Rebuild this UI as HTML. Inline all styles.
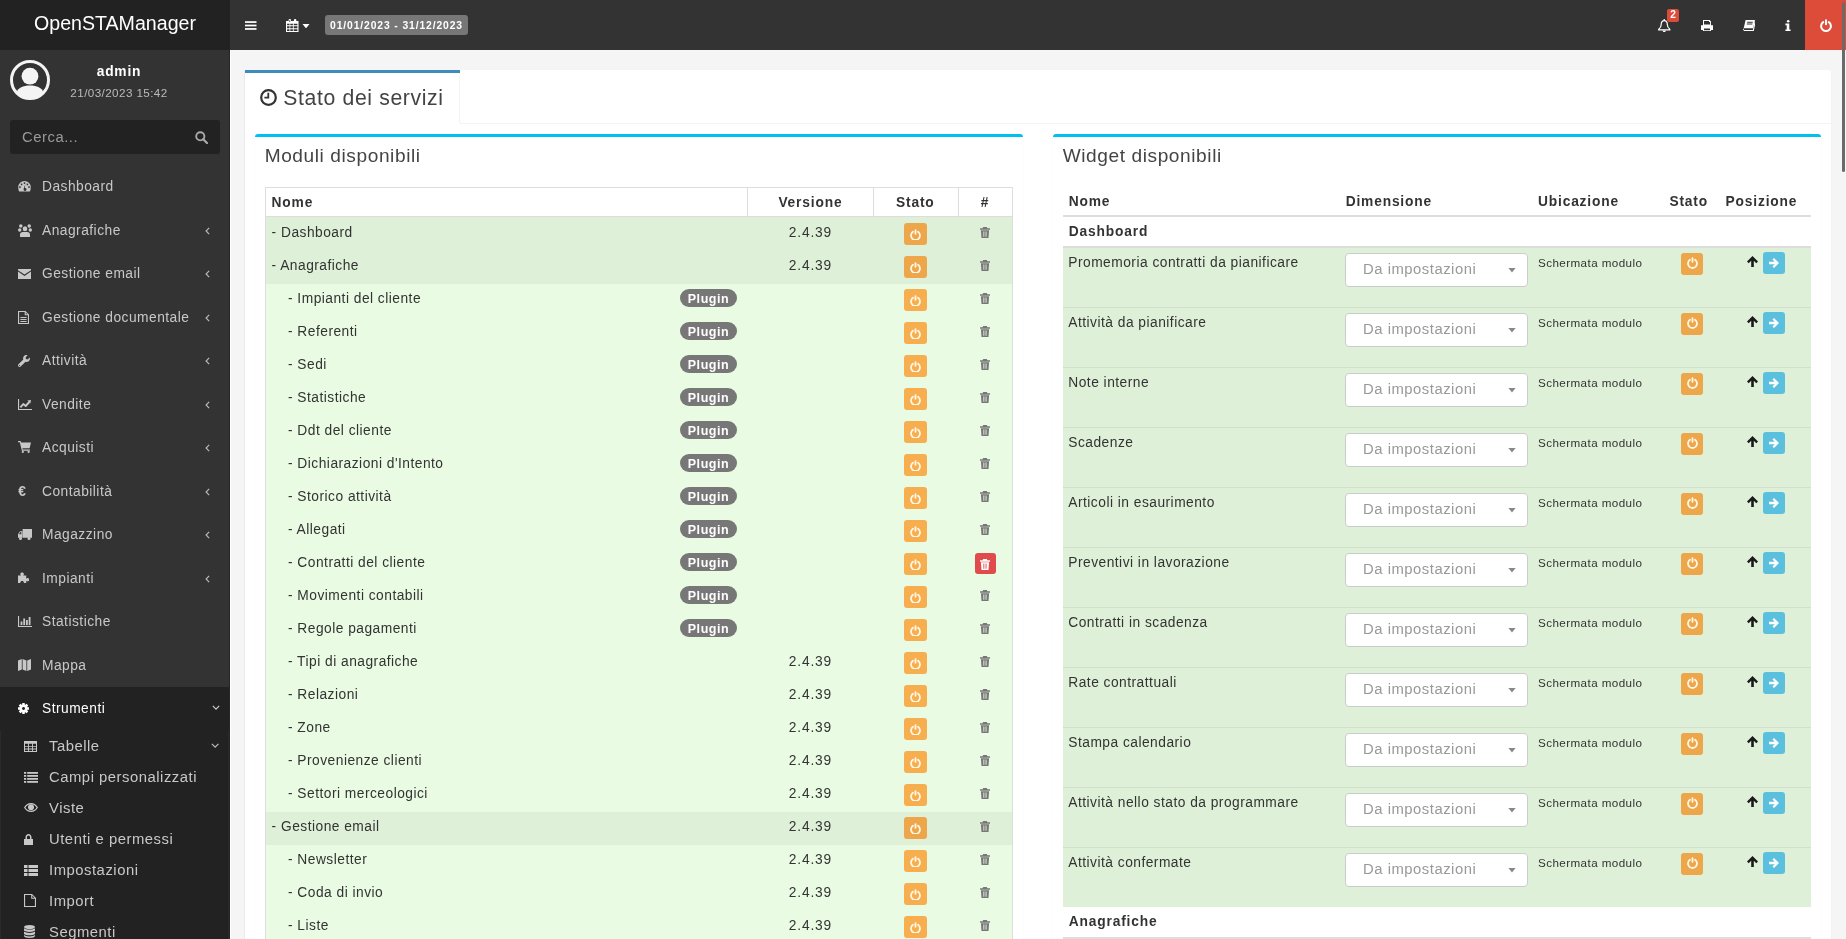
<!DOCTYPE html><html><head><meta charset="utf-8"><title>OpenSTAManager</title><style>
*{box-sizing:border-box;margin:0;padding:0}
html,body{width:1846px;height:939px;overflow:hidden}
body{font-family:"Liberation Sans", sans-serif;font-size:14px;color:#333;background:#f5f5f5;position:relative}
.abs{position:absolute}
#wrap{position:absolute;left:0;top:0;width:1846px;height:939px;overflow:hidden;will-change:transform}
.t{position:absolute;height:30px;line-height:30px}
svg{display:block}
</style></head><body><div id="wrap">
<div class="abs" style="left:0px;top:0px;width:230px;height:50px;background:#222;"></div>
<div class="t" style="left:0.00px;top:7.71px;width:230px;text-align:center;font-size:19.60px;color:#fff;letter-spacing:0em;">OpenSTAManager</div>
<div class="abs" style="left:230px;top:0px;width:1616px;height:50px;background:#333;"></div>
<div class="abs" style="left:245px;top:21px;"><svg width="11.5" height="9" viewBox="0 0 12 9" fill="currentColor" style="color:#fff;"><rect x="0" y="0" width="12" height="1.8"/><rect x="0" y="3.6" width="12" height="1.8"/><rect x="0" y="7.2" width="12" height="1.8"/></svg></div>
<div class="abs" style="left:286px;top:19px;"><svg width="12.5" height="13" viewBox="0 0 12.5 13" fill="currentColor" style="color:#fff;"><path fill-rule="evenodd" d="M0 1.9h12.5V13H0z M1.1 4.8h2.4v1.5H1.1z M4.3 4.8h2.6v1.5H4.3z M7.7 4.8h3.7v1.5H7.7z M1.1 7.3h2.4v2H1.1z M4.3 7.3h2.6v2H4.3z M7.7 7.3h3.7v2H7.7z M1.1 10.2h2.4v1.8H1.1z M4.3 10.2h2.6v1.8H4.3z M7.7 10.2h3.7v1.8H7.7z"/><rect x="2.6" y="0" width="2.4" height="3.6" rx="1.1"/><rect x="7.9" y="0" width="2.4" height="3.6" rx="1.1"/><rect x="3.4" y="0.9" width="0.8" height="2.2" rx=".4" fill="#333"/></svg></div>
<div class="abs" style="left:302px;top:23.8px;"><svg width="8" height="4.4" viewBox="0 0 8 5" fill="currentColor" style="color:#fff;"><path d="M0 0h8L4 5z"/></svg></div>
<div class="abs" style="left:325px;top:15px;width:143px;height:20px;background:#777;border-radius:3px"></div>
<div class="t" style="left:325.00px;top:11.12px;width:143px;text-align:center;font-size:10.34px;color:#fff;font-weight:bold;letter-spacing:0.085em;">01/01/2023 - 31/12/2023</div>
<div class="abs" style="left:1658px;top:19px;"><svg width="12.5" height="13" viewBox="0 0 12.5 13" fill="currentColor" style="color:#fff;"><circle cx="6.25" cy="0.9" r="0.8"/><path d="M6.25 1.6C8.5 1.6 9.3 3.4 9.3 5.6c0 2 .6 3.4 2.5 4.6v.6H.7v-.6c1.9-1.2 2.5-2.6 2.5-4.6 0-2.2.8-4 3.05-4z" fill="none" stroke="currentColor" stroke-width="1.2"/><path d="M4.7 11.4h3.1c0 1-.7 1.6-1.55 1.6S4.7 12.4 4.7 11.4z"/></svg></div>
<div class="abs" style="left:1667px;top:9px;width:12px;height:12.5px;background:#dd4b39;border-radius:2px"></div>
<div class="t" style="left:1667.00px;top:0.17px;width:12px;text-align:center;font-size:10.18px;color:#fff;font-weight:bold;letter-spacing:0em;">2</div>
<div class="abs" style="left:1701px;top:19.8px;"><svg width="12" height="11.3" viewBox="0 0 12 11.3" fill="currentColor" style="color:#fff;"><path fill-rule="evenodd" d="M2 0h6.6L10 1.4V5.2h2V10H10v1.3H2V10H0V5.2h2z M3 1.1v3.4h6.1V2H8V1.1z M3 8.6v1.6h6V8.6z"/></svg></div>
<div class="abs" style="left:1743.2px;top:19.8px;"><svg width="12" height="11.3" viewBox="0 0 12 11.3" fill="currentColor" style="color:#fff;"><path d="M2.6 0H12l-1.8 8.3H.7z"/><path d="M4.3 1.7h5.6l-.25 1.1H4.05z M3.95 3.4h5.6l-.25 1.1H3.7z" fill="#333"/><path d="M1 10.5H10.3L12.2 1.6" fill="none" stroke="currentColor" stroke-width="1.1"/><path d="M0 9.5c0-.5.4-.9.9-.9v1.9c-.5 0-.9-.5-.9-1z"/></svg></div>
<div class="abs" style="left:1784.5px;top:19.5px;"><svg width="6" height="11" viewBox="0 0 6 11" fill="currentColor" style="color:#fff;"><circle cx="3.2" cy="1.3" r="1.3"/><path d="M0.4 3.6h3.9v5.8h1.3V11H0.4V9.4h1.3V5.2H0.4z"/></svg></div>
<div class="abs" style="left:1805px;top:0px;width:41px;height:50px;background:#dd4b39;"></div>
<div class="abs" style="left:1819.5px;top:18.5px;"><svg width="12" height="13" viewBox="0 0 12 13" fill="currentColor" style="color:#fff;"><path d="M3.2 3.1A4.9 4.9 0 1 0 8.8 3.1" fill="none" stroke="currentColor" stroke-width="2" stroke-linecap="round"/><rect x="5" y="0.2" width="2" height="6" rx="1"/></svg></div>
<div class="abs" style="left:0px;top:50px;width:230px;height:889px;background:#333;"></div>
<div class="abs" style="left:10px;top:60px;"><svg width="40" height="40" viewBox="0 0 40 40" fill="currentColor" style="color:#f4f4f4;"><circle cx="20" cy="20" r="18.5" fill="none" stroke="currentColor" stroke-width="3"/><circle cx="20" cy="16.2" r="8.4"/><path d="M6.6 32.2C8.2 27.6 12.8 25.4 20 25.4s11.8 2.2 13.4 6.8C30.2 36 25.4 38.6 20 38.6S9.8 36 6.6 32.2z"/></svg></div>
<div class="t" style="left:70.00px;top:56.63px;width:98px;text-align:center;font-size:13.78px;color:#fff;font-weight:bold;letter-spacing:0.06em;">admin</div>
<div class="t" style="left:70.00px;top:78.36px;width:98px;text-align:center;font-size:11.66px;color:#bbb;letter-spacing:0.035em;">21/03/2023 15:42</div>
<div class="abs" style="left:10px;top:120px;width:210px;height:34px;background:#222;border-radius:3px"></div>
<div class="t" style="left:22.00px;top:122.26px;white-space:nowrap;text-align:left;font-size:14.84px;color:#999;letter-spacing:0.035em;">Cerca...</div>
<div class="abs" style="left:195px;top:131px;"><svg width="13" height="13" viewBox="0 0 13 13" fill="currentColor" style="color:#aaa;"><circle cx="5.3" cy="5.3" r="4.1" fill="none" stroke="currentColor" stroke-width="1.9"/><path d="M8.2 8.2l3.8 3.8" stroke="currentColor" stroke-width="2.2" stroke-linecap="round"/></svg></div>
<div class="abs" style="left:0px;top:686.75px;width:230px;height:252.25px;background:#222;"></div>
<div class="t" style="left:42.00px;top:172.28px;white-space:nowrap;text-align:left;font-size:13.78px;color:#c8c8c8;letter-spacing:0.035em;">Dashboard</div>
<div class="abs" style="left:18px;top:181.3px;"><svg width="13" height="10.6" viewBox="0 0 13 11" fill="currentColor" style="color:#c8c8c8;"><path fill-rule="evenodd" d="M6.5 0A6.5 6.5 0 0 1 13 6.5c0 1.9-.4 3.3-1 4.5H1c-.6-1.2-1-2.6-1-4.5A6.5 6.5 0 0 1 6.5 0z M6.5 1.2a.9.9 0 1 0 .01 0z M3.5 2.6a.9.9 0 1 0 .01 0z M9.5 2.6a.9.9 0 1 0 .01 0z M1.8 5.5a.9.9 0 1 0 .01 0z M11.2 5.5a.9.9 0 1 0 .01 0z M7.3 3.2L6.9 7.4A1.5 1.5 0 1 1 5.6 8.6 1.5 1.5 0 0 1 6 7.3z"/></svg></div>
<div class="t" style="left:42.00px;top:215.78px;white-space:nowrap;text-align:left;font-size:13.78px;color:#c8c8c8;letter-spacing:0.035em;">Anagrafiche</div>
<div class="abs" style="left:18px;top:223.5px;"><svg width="14" height="13.5" viewBox="0 0 14 13.5" fill="currentColor" style="color:#c8c8c8;"><circle cx="2.8" cy="2" r="1.75"/><circle cx="11.2" cy="2" r="1.75"/><ellipse cx="1.7" cy="6" rx="1.7" ry="1.65"/><ellipse cx="12.3" cy="6" rx="1.7" ry="1.65"/><ellipse cx="7" cy="4.7" rx="2.3" ry="2.5"/><path d="M2 10.6C2 8.9 3.2 7.9 4.8 7.9h4.4c1.6 0 2.8 1 2.8 2.7v1.9c0 .6-.4 1-1 1H3c-.6 0-1-.4-1-1z"/></svg></div>
<div class="abs" style="left:205.4px;top:226.55px;"><svg width="5" height="8" viewBox="0 0 6 9" fill="currentColor" style="color:#bbb;"><path d="M5 0.8L1.3 4.5 5 8.2" fill="none" stroke="currentColor" stroke-width="1.4"/></svg></div>
<div class="t" style="left:42.00px;top:259.28px;white-space:nowrap;text-align:left;font-size:13.78px;color:#c8c8c8;letter-spacing:0.035em;">Gestione email</div>
<div class="abs" style="left:18px;top:268.5px;"><svg width="13" height="10" viewBox="0 0 13 10" fill="currentColor" style="color:#c8c8c8;"><path d="M0 0h13v1.2L6.5 5.6 0 1.2z M0 2.6l6.5 4.4L13 2.6V10H0z"/></svg></div>
<div class="abs" style="left:205.4px;top:270.04999999999995px;"><svg width="5" height="8" viewBox="0 0 6 9" fill="currentColor" style="color:#bbb;"><path d="M5 0.8L1.3 4.5 5 8.2" fill="none" stroke="currentColor" stroke-width="1.4"/></svg></div>
<div class="t" style="left:42.00px;top:302.78px;white-space:nowrap;text-align:left;font-size:13.78px;color:#c8c8c8;letter-spacing:0.035em;">Gestione documentale</div>
<div class="abs" style="left:18px;top:311px;"><svg width="11" height="13" viewBox="0 0 11 13" fill="currentColor" style="color:#c8c8c8;"><path fill-rule="evenodd" d="M0 0h7.5L11 3.5V13H0z M1.1 1.1v10.8h8.8V4.3H6.7V1.1z M7.8 1.6v1.6h1.6z M2.4 6h6.2v1H2.4z M2.4 8h6.2v1H2.4z M2.4 10h6.2v1H2.4z"/></svg></div>
<div class="abs" style="left:205.4px;top:313.54999999999995px;"><svg width="5" height="8" viewBox="0 0 6 9" fill="currentColor" style="color:#bbb;"><path d="M5 0.8L1.3 4.5 5 8.2" fill="none" stroke="currentColor" stroke-width="1.4"/></svg></div>
<div class="t" style="left:42.00px;top:346.28px;white-space:nowrap;text-align:left;font-size:13.78px;color:#c8c8c8;letter-spacing:0.035em;">Attività</div>
<div class="abs" style="left:18px;top:355px;"><svg width="12" height="12" viewBox="0 0 12 12" fill="currentColor" style="color:#c8c8c8;"><path d="M11.7 2.6L9.6 4.4 7.9 4.1 7.6 2.4 9.5.3C8 -.3 6.3.3 5.5 1.7c-.5.9-.5 1.9-.2 2.8L.5 9.3c-.7.7-.7 1.7 0 2.3s1.6.6 2.2 0l4.8-4.8c.9.3 2 .3 2.8-.2 1.4-.8 2-2.5 1.4-4zM1.6 11.2a.6.6 0 1 1 0-1.2.6.6 0 0 1 0 1.2z"/></svg></div>
<div class="abs" style="left:205.4px;top:357.04999999999995px;"><svg width="5" height="8" viewBox="0 0 6 9" fill="currentColor" style="color:#bbb;"><path d="M5 0.8L1.3 4.5 5 8.2" fill="none" stroke="currentColor" stroke-width="1.4"/></svg></div>
<div class="t" style="left:42.00px;top:389.78px;white-space:nowrap;text-align:left;font-size:13.78px;color:#c8c8c8;letter-spacing:0.035em;">Vendite</div>
<div class="abs" style="left:18px;top:398.5px;"><svg width="14" height="11" viewBox="0 0 14 11" fill="currentColor" style="color:#c8c8c8;"><path d="M0 0h1.1v9.9H14V11H0z"/><path d="M2.4 8.4L5.3 5l2.4 2 3.6-4" fill="none" stroke="currentColor" stroke-width="1.9" stroke-linejoin="round"/><path d="M9.4 1.6L13 .9l-.6 3.6z"/></svg></div>
<div class="abs" style="left:205.4px;top:400.54999999999995px;"><svg width="5" height="8" viewBox="0 0 6 9" fill="currentColor" style="color:#bbb;"><path d="M5 0.8L1.3 4.5 5 8.2" fill="none" stroke="currentColor" stroke-width="1.4"/></svg></div>
<div class="t" style="left:42.00px;top:433.28px;white-space:nowrap;text-align:left;font-size:13.78px;color:#c8c8c8;letter-spacing:0.035em;">Acquisti</div>
<div class="abs" style="left:18px;top:441px;"><svg width="13" height="12" viewBox="0 0 13 12" fill="currentColor" style="color:#c8c8c8;"><path d="M0 0h2.6l.5 1.6h9.9l-1.4 5.6H4.4l.4 1.3h7.1v1.2H3.9L1.8 1.2H0z"/><circle cx="4.8" cy="10.9" r="1.1"/><circle cx="10.6" cy="10.9" r="1.1"/></svg></div>
<div class="abs" style="left:205.4px;top:444.04999999999995px;"><svg width="5" height="8" viewBox="0 0 6 9" fill="currentColor" style="color:#bbb;"><path d="M5 0.8L1.3 4.5 5 8.2" fill="none" stroke="currentColor" stroke-width="1.4"/></svg></div>
<div class="t" style="left:42.00px;top:476.78px;white-space:nowrap;text-align:left;font-size:13.78px;color:#c8c8c8;letter-spacing:0.035em;">Contabilità</div>
<div class="t" style="left:18.30px;top:476.78px;white-space:nowrap;text-align:left;font-size:13.78px;color:#c8c8c8;font-weight:bold;letter-spacing:0em;">€</div>
<div class="abs" style="left:205.4px;top:487.54999999999995px;"><svg width="5" height="8" viewBox="0 0 6 9" fill="currentColor" style="color:#bbb;"><path d="M5 0.8L1.3 4.5 5 8.2" fill="none" stroke="currentColor" stroke-width="1.4"/></svg></div>
<div class="t" style="left:42.00px;top:520.28px;white-space:nowrap;text-align:left;font-size:13.78px;color:#c8c8c8;letter-spacing:0.035em;">Magazzino</div>
<div class="abs" style="left:18px;top:528.5px;"><svg width="14" height="11" viewBox="0 0 14 11" fill="currentColor" style="color:#c8c8c8;"><path fill-rule="evenodd" d="M4.6 0H14v8.8H4.6z M0 5.2L2 2.2h2.3v6.6H0z M1 5.2h2.3V3.2H2.2z"/><circle cx="2.5" cy="9.4" r="1.5"/><circle cx="11" cy="9.4" r="1.5"/></svg></div>
<div class="abs" style="left:205.4px;top:531.05px;"><svg width="5" height="8" viewBox="0 0 6 9" fill="currentColor" style="color:#bbb;"><path d="M5 0.8L1.3 4.5 5 8.2" fill="none" stroke="currentColor" stroke-width="1.4"/></svg></div>
<div class="t" style="left:42.00px;top:563.78px;white-space:nowrap;text-align:left;font-size:13.78px;color:#c8c8c8;letter-spacing:0.035em;">Impianti</div>
<div class="abs" style="left:18px;top:572px;"><svg width="12" height="11.4" viewBox="0 0 12 11.4" fill="currentColor" style="color:#c8c8c8;"><path d="M0 3.4h3c-.5-.4-.7-.8-.7-1.3C2.3 1.1 3.1.4 4.1.4s1.8.7 1.8 1.7c0 .5-.2.9-.7 1.3h3v3.3c.4-.4.8-.6 1.3-.6 1 0 1.6.7 1.6 1.6s-.6 1.6-1.6 1.6c-.5 0-.9-.2-1.3-.6v2.7H5.5c.3-.3.4-.6.4-1 0-.9-.8-1.5-1.8-1.5s-1.8.6-1.8 1.5c0 .4.1.7.4 1H0z"/></svg></div>
<div class="abs" style="left:205.4px;top:574.55px;"><svg width="5" height="8" viewBox="0 0 6 9" fill="currentColor" style="color:#bbb;"><path d="M5 0.8L1.3 4.5 5 8.2" fill="none" stroke="currentColor" stroke-width="1.4"/></svg></div>
<div class="t" style="left:42.00px;top:607.28px;white-space:nowrap;text-align:left;font-size:13.78px;color:#c8c8c8;letter-spacing:0.035em;">Statistiche</div>
<div class="abs" style="left:18px;top:615.5px;"><svg width="14" height="11" viewBox="0 0 14 11" fill="currentColor" style="color:#c8c8c8;"><path d="M0 0h1.1v9.9H14V11H0z"/><rect x="2.6" y="5.5" width="1.8" height="3.6"/><rect x="5.3" y="2.5" width="1.8" height="6.6"/><rect x="8" y="4" width="1.8" height="5.1"/><rect x="10.7" y="1" width="1.8" height="8.1"/></svg></div>
<div class="t" style="left:42.00px;top:650.78px;white-space:nowrap;text-align:left;font-size:13.78px;color:#c8c8c8;letter-spacing:0.035em;">Mappa</div>
<div class="abs" style="left:18px;top:659px;"><svg width="13" height="12" viewBox="0 0 13 12" fill="currentColor" style="color:#c8c8c8;"><path d="M0 1.5L3.8 0v10.5L0 12z M4.6 0l3.8 1.5V12L4.6 10.5z M9.2 1.5L13 0v10.5L9.2 12z"/></svg></div>
<div class="t" style="left:42.00px;top:694.28px;white-space:nowrap;text-align:left;font-size:13.78px;color:#fff;letter-spacing:0.035em;">Strumenti</div>
<div class="abs" style="left:18px;top:703px;"><svg width="11" height="11" viewBox="0 0 11 11" fill="currentColor" style="color:#fff;"><path fill-rule="evenodd" d="M4.13 1.63 L4.28 0.03 L6.72 0.03 L6.87 1.63 L7.27 1.80 L8.50 0.77 L10.23 2.50 L9.20 3.73 L9.37 4.13 L10.97 4.28 L10.97 6.72 L9.37 6.87 L9.20 7.27 L10.23 8.50 L8.50 10.23 L7.27 9.20 L6.87 9.37 L6.72 10.97 L4.28 10.97 L4.13 9.37 L3.73 9.20 L2.50 10.23 L0.77 8.50 L1.80 7.27 L1.63 6.87 L0.03 6.72 L0.03 4.28 L1.63 4.13 L1.80 3.73 L0.77 2.50 L2.50 0.77 L3.73 1.80z M5.5 4.0a1.5 1.5 0 1 0 .01 0z"/></svg></div>
<div class="abs" style="left:212px;top:705.35px;"><svg width="8" height="5.2" viewBox="0 0 9 6" fill="currentColor" style="color:#ccc;"><path d="M0.8 1l3.7 3.7L8.2 1" fill="none" stroke="currentColor" stroke-width="1.4"/></svg></div>
<div class="t" style="left:49.00px;top:731.26px;white-space:nowrap;text-align:left;font-size:14.84px;color:#c8c8c8;letter-spacing:0.035em;">Tabelle</div>
<div class="abs" style="left:24px;top:740.5px;"><svg width="13" height="11" viewBox="0 0 13 11" fill="currentColor" style="color:#c8c8c8;"><path fill-rule="evenodd" d="M0 0h13v11H0z M1 2.8h3.1v2.1H1z M5 2.8h3v2.1H5z M8.9 2.8H12v2.1H8.9z M1 5.8h3.1v1.8H1z M5 5.8h3v1.8H5z M8.9 5.8H12v1.8H8.9z M1 8.5h3.1V10H1z M5 8.5h3V10H5z M8.9 8.5H12V10H8.9z"/></svg></div>
<div class="abs" style="left:210.7px;top:743.4px;"><svg width="8.3" height="5.3" viewBox="0 0 9 6" fill="currentColor" style="color:#bbb;"><path d="M0.8 1l3.7 3.7L8.2 1" fill="none" stroke="currentColor" stroke-width="1.4"/></svg></div>
<div class="t" style="left:49.00px;top:762.26px;white-space:nowrap;text-align:left;font-size:14.84px;color:#c8c8c8;letter-spacing:0.035em;">Campi personalizzati</div>
<div class="abs" style="left:24px;top:771.5px;"><svg width="14" height="11" viewBox="0 0 14 11" fill="currentColor" style="color:#c8c8c8;"><rect x="0" y="0" width="2.2" height="1.8"/><rect x="3.2" y="0" width="10.8" height="1.8"/><rect x="0" y="3" width="2.2" height="1.8"/><rect x="3.2" y="3" width="10.8" height="1.8"/><rect x="0" y="6" width="2.2" height="1.8"/><rect x="3.2" y="6" width="10.8" height="1.8"/><rect x="0" y="9" width="2.2" height="1.8"/><rect x="3.2" y="9" width="10.8" height="1.8"/></svg></div>
<div class="t" style="left:49.00px;top:793.26px;white-space:nowrap;text-align:left;font-size:14.84px;color:#c8c8c8;letter-spacing:0.035em;">Viste</div>
<div class="abs" style="left:24px;top:802.5px;"><svg width="14" height="9" viewBox="0 0 14 9" fill="currentColor" style="color:#c8c8c8;"><path fill-rule="evenodd" d="M7 0C10 0 12.6 1.8 14 4.5 12.6 7.2 10 9 7 9S1.4 7.2 0 4.5C1.4 1.8 4 0 7 0z M7 1.2C4.8 1.2 2.7 2.4 1.4 4.5 2.7 6.6 4.8 7.8 7 7.8s4.3-1.2 5.6-3.3C11.3 2.4 9.2 1.2 7 1.2z"/><circle cx="7" cy="4.3" r="3"/></svg></div>
<div class="t" style="left:49.00px;top:824.26px;white-space:nowrap;text-align:left;font-size:14.84px;color:#c8c8c8;letter-spacing:0.035em;">Utenti e permessi</div>
<div class="abs" style="left:24px;top:833.5px;"><svg width="9" height="11" viewBox="0 0 9 11" fill="currentColor" style="color:#c8c8c8;"><path fill-rule="evenodd" d="M0 5h9v6H0z M1.5 5V3.2C1.5 1.4 2.8 0 4.5 0S7.5 1.4 7.5 3.2V5H6V3.2C6 2.3 5.3 1.5 4.5 1.5S3 2.3 3 3.2V5z"/></svg></div>
<div class="t" style="left:49.00px;top:855.26px;white-space:nowrap;text-align:left;font-size:14.84px;color:#c8c8c8;letter-spacing:0.035em;">Impostazioni</div>
<div class="abs" style="left:24px;top:864.5px;"><svg width="14" height="11" viewBox="0 0 14 11" fill="currentColor" style="color:#c8c8c8;"><rect x="0" y="0" width="3.5" height="3"/><rect x="4.5" y="0" width="9.5" height="3"/><rect x="0" y="4" width="3.5" height="3"/><rect x="4.5" y="4" width="9.5" height="3"/><rect x="0" y="8" width="3.5" height="3"/><rect x="4.5" y="8" width="9.5" height="3"/></svg></div>
<div class="t" style="left:49.00px;top:886.26px;white-space:nowrap;text-align:left;font-size:14.84px;color:#c8c8c8;letter-spacing:0.035em;">Import</div>
<div class="abs" style="left:24px;top:894px;"><svg width="12" height="13" viewBox="0 0 12 13" fill="currentColor" style="color:#c8c8c8;"><path fill-rule="evenodd" d="M0 0h8l4 4v9H0z M1.1 1.1v10.8h9.8V4.8H7.2V1.1z M8.3 1.6v2.1h2.1z"/></svg></div>
<div class="t" style="left:49.00px;top:917.26px;white-space:nowrap;text-align:left;font-size:14.84px;color:#c8c8c8;letter-spacing:0.035em;">Segmenti</div>
<div class="abs" style="left:24px;top:925px;"><svg width="11" height="13" viewBox="0 0 11 13" fill="currentColor" style="color:#c8c8c8;"><ellipse cx="5.5" cy="2" rx="5.5" ry="2"/><path d="M0 3.2c1 .9 3 1.4 5.5 1.4S10 4.1 11 3.2v2.3c-1 .9-3 1.4-5.5 1.4S1 6.4 0 5.5z M0 6.6c1 .9 3 1.4 5.5 1.4S10 7.5 11 6.6v2.3c-1 .9-3 1.4-5.5 1.4S1 9.8 0 8.9z M0 10c1 .9 3 1.4 5.5 1.4S10 10.9 11 10v1c0 1.1-2.5 2-5.5 2S0 12.1 0 11z"/></svg></div>
<div class="abs" style="left:229px;top:50px;width:1px;height:889px;background:#262626;"></div>
<div class="abs" style="left:230px;top:50px;width:1px;height:889px;background:#fff;"></div>
<div class="abs" style="left:0px;top:731px;width:1px;height:208px;background:#2b2b2b;"></div>
<div class="abs" style="left:228px;top:731px;width:1px;height:208px;background:#2a2a2a;"></div>
<div class="abs" style="left:244px;top:70px;width:1px;height:869px;background:#ececec;"></div>
<div class="abs" style="left:245px;top:70px;width:1586px;height:900px;background:#fff;box-shadow:0 1px 1px rgba(0,0,0,.1);border-radius:3px"></div>
<div class="abs" style="left:245px;top:70px;width:215px;height:3px;background:#3c8dbc;"></div>
<div class="abs" style="left:459px;top:73px;width:1px;height:50px;background:#f4f4f4;"></div>
<div class="abs" style="left:460px;top:123px;width:1371px;height:1px;background:#f4f4f4;"></div>
<div class="abs" style="left:259.5px;top:89px;"><svg width="17" height="17" viewBox="0 0 17 17" fill="currentColor" style="color:#333;"><circle cx="8.5" cy="8.5" r="7.3" fill="none" stroke="currentColor" stroke-width="2.2"/><path d="M7.4 3.8h1.8v5.8H4.4V7.8h3z"/></svg></div>
<div class="t" style="left:283.30px;top:83.05px;white-space:nowrap;text-align:left;font-size:21.20px;color:#444;letter-spacing:0.03em;">Stato dei servizi</div>
<div class="abs" style="left:255px;top:134px;width:768px;height:830px;background:#fff;border-top:3px solid #00c0ef;border-radius:3px;box-shadow:0 1px 1px rgba(0,0,0,.12)"></div>
<div class="t" style="left:264.70px;top:140.79px;white-space:nowrap;text-align:left;font-size:19.08px;color:#444;letter-spacing:0.031em;">Moduli disponibili</div>
<div class="abs" style="left:1053px;top:134px;width:768px;height:830px;background:#fff;border-top:3px solid #00c0ef;border-radius:3px;box-shadow:0 1px 1px rgba(0,0,0,.12)"></div>
<div class="t" style="left:1062.70px;top:140.79px;white-space:nowrap;text-align:left;font-size:19.08px;color:#444;letter-spacing:0.031em;">Widget disponibili</div>
<div class="abs" style="left:265px;top:187px;width:747.5px;height:30px;background:#fff;border:1px solid #ddd"></div>
<div class="abs" style="left:747.4px;top:187px;width:1px;height:30px;background:#ddd;"></div>
<div class="abs" style="left:873.3px;top:187px;width:1px;height:30px;background:#ddd;"></div>
<div class="abs" style="left:957.5px;top:187px;width:1px;height:30px;background:#ddd;"></div>
<div class="t" style="left:271.60px;top:187.63px;white-space:nowrap;text-align:left;font-size:13.78px;color:#333;font-weight:bold;letter-spacing:0.06em;">Nome</div>
<div class="t" style="left:747.40px;top:187.63px;width:126px;text-align:center;font-size:13.78px;color:#333;font-weight:bold;letter-spacing:0.06em;">Versione</div>
<div class="t" style="left:873.30px;top:187.63px;width:84px;text-align:center;font-size:13.78px;color:#333;font-weight:bold;letter-spacing:0.06em;">Stato</div>
<div class="t" style="left:957.50px;top:187.63px;width:55px;text-align:center;font-size:13.78px;color:#333;font-weight:bold;letter-spacing:0.06em;">#</div>
<div class="abs" style="left:265px;top:217px;width:747.5px;height:34px;background:#dff0d8;border-left:1px solid #ddd;border-right:1px solid #ddd"></div>
<div class="t" style="left:271.60px;top:217.63px;white-space:nowrap;text-align:left;font-size:13.78px;color:#333;letter-spacing:0.035em;">- Dashboard</div>
<div class="t" style="left:747.40px;top:217.63px;width:126px;text-align:center;font-size:13.78px;color:#333;letter-spacing:0.06em;">2.4.39</div>
<div class="abs" style="left:904px;top:223px;width:23px;height:22px;background:#eea64a;border-radius:3px"></div>
<div class="abs" style="left:910px;top:228.6px;"><svg width="11" height="11.9" viewBox="0 0 12 13" fill="currentColor" style="color:#fff8e8;"><path d="M3.2 3.1A4.9 4.9 0 1 0 8.8 3.1" fill="none" stroke="currentColor" stroke-width="2" stroke-linecap="round"/><rect x="5" y="0.2" width="2" height="6" rx="1"/></svg></div>
<div class="abs" style="left:980.3px;top:227px;"><svg width="10" height="11" viewBox="0 0 10 11" fill="currentColor" style="color:#777;"><path fill-rule="evenodd" d="M3.2 0h3.6l.6 1.2H10v1.5H0V1.2h2.6z M0.9 3.2h8.2l-.6 7.8H1.5z M3.4 4.5v5.2h.9V4.5z M5.6 4.5v5.2h.9V4.5z"/></svg></div>
<div class="abs" style="left:265px;top:251px;width:747.5px;height:33px;background:#dff0d8;border-left:1px solid #ddd;border-right:1px solid #ddd"></div>
<div class="t" style="left:271.60px;top:250.63px;white-space:nowrap;text-align:left;font-size:13.78px;color:#333;letter-spacing:0.035em;">- Anagrafiche</div>
<div class="t" style="left:747.40px;top:250.63px;width:126px;text-align:center;font-size:13.78px;color:#333;letter-spacing:0.06em;">2.4.39</div>
<div class="abs" style="left:904px;top:256px;width:23px;height:22px;background:#eea64a;border-radius:3px"></div>
<div class="abs" style="left:910px;top:261.6px;"><svg width="11" height="11.9" viewBox="0 0 12 13" fill="currentColor" style="color:#fff8e8;"><path d="M3.2 3.1A4.9 4.9 0 1 0 8.8 3.1" fill="none" stroke="currentColor" stroke-width="2" stroke-linecap="round"/><rect x="5" y="0.2" width="2" height="6" rx="1"/></svg></div>
<div class="abs" style="left:980.3px;top:260px;"><svg width="10" height="11" viewBox="0 0 10 11" fill="currentColor" style="color:#777;"><path fill-rule="evenodd" d="M3.2 0h3.6l.6 1.2H10v1.5H0V1.2h2.6z M0.9 3.2h8.2l-.6 7.8H1.5z M3.4 4.5v5.2h.9V4.5z M5.6 4.5v5.2h.9V4.5z"/></svg></div>
<div class="abs" style="left:265px;top:284px;width:747.5px;height:33px;background:#e9fbe3;border-left:1px solid #ddd;border-right:1px solid #ddd"></div>
<div class="t" style="left:288.00px;top:283.63px;white-space:nowrap;text-align:left;font-size:13.78px;color:#333;letter-spacing:0.035em;">- Impianti del cliente</div>
<div class="abs" style="left:680px;top:289.3px;width:57px;height:17.5px;background:#777;border-radius:9px"></div>
<div class="t" style="left:680.00px;top:284.07px;width:57px;text-align:center;font-size:12.51px;color:#fff;font-weight:bold;letter-spacing:0.045em;">Plugin</div>
<div class="abs" style="left:904px;top:289px;width:23px;height:22px;background:#f7ae4f;border-radius:3px"></div>
<div class="abs" style="left:910px;top:294.6px;"><svg width="11" height="11.9" viewBox="0 0 12 13" fill="currentColor" style="color:#fff8e8;"><path d="M3.2 3.1A4.9 4.9 0 1 0 8.8 3.1" fill="none" stroke="currentColor" stroke-width="2" stroke-linecap="round"/><rect x="5" y="0.2" width="2" height="6" rx="1"/></svg></div>
<div class="abs" style="left:980.3px;top:293px;"><svg width="10" height="11" viewBox="0 0 10 11" fill="currentColor" style="color:#777;"><path fill-rule="evenodd" d="M3.2 0h3.6l.6 1.2H10v1.5H0V1.2h2.6z M0.9 3.2h8.2l-.6 7.8H1.5z M3.4 4.5v5.2h.9V4.5z M5.6 4.5v5.2h.9V4.5z"/></svg></div>
<div class="abs" style="left:265px;top:317px;width:747.5px;height:33px;background:#e9fbe3;border-left:1px solid #ddd;border-right:1px solid #ddd"></div>
<div class="t" style="left:288.00px;top:316.63px;white-space:nowrap;text-align:left;font-size:13.78px;color:#333;letter-spacing:0.035em;">- Referenti</div>
<div class="abs" style="left:680px;top:322.3px;width:57px;height:17.5px;background:#777;border-radius:9px"></div>
<div class="t" style="left:680.00px;top:317.07px;width:57px;text-align:center;font-size:12.51px;color:#fff;font-weight:bold;letter-spacing:0.045em;">Plugin</div>
<div class="abs" style="left:904px;top:322px;width:23px;height:22px;background:#f7ae4f;border-radius:3px"></div>
<div class="abs" style="left:910px;top:327.6px;"><svg width="11" height="11.9" viewBox="0 0 12 13" fill="currentColor" style="color:#fff8e8;"><path d="M3.2 3.1A4.9 4.9 0 1 0 8.8 3.1" fill="none" stroke="currentColor" stroke-width="2" stroke-linecap="round"/><rect x="5" y="0.2" width="2" height="6" rx="1"/></svg></div>
<div class="abs" style="left:980.3px;top:326px;"><svg width="10" height="11" viewBox="0 0 10 11" fill="currentColor" style="color:#777;"><path fill-rule="evenodd" d="M3.2 0h3.6l.6 1.2H10v1.5H0V1.2h2.6z M0.9 3.2h8.2l-.6 7.8H1.5z M3.4 4.5v5.2h.9V4.5z M5.6 4.5v5.2h.9V4.5z"/></svg></div>
<div class="abs" style="left:265px;top:350px;width:747.5px;height:33px;background:#e9fbe3;border-left:1px solid #ddd;border-right:1px solid #ddd"></div>
<div class="t" style="left:288.00px;top:349.63px;white-space:nowrap;text-align:left;font-size:13.78px;color:#333;letter-spacing:0.035em;">- Sedi</div>
<div class="abs" style="left:680px;top:355.3px;width:57px;height:17.5px;background:#777;border-radius:9px"></div>
<div class="t" style="left:680.00px;top:350.07px;width:57px;text-align:center;font-size:12.51px;color:#fff;font-weight:bold;letter-spacing:0.045em;">Plugin</div>
<div class="abs" style="left:904px;top:355px;width:23px;height:22px;background:#f7ae4f;border-radius:3px"></div>
<div class="abs" style="left:910px;top:360.6px;"><svg width="11" height="11.9" viewBox="0 0 12 13" fill="currentColor" style="color:#fff8e8;"><path d="M3.2 3.1A4.9 4.9 0 1 0 8.8 3.1" fill="none" stroke="currentColor" stroke-width="2" stroke-linecap="round"/><rect x="5" y="0.2" width="2" height="6" rx="1"/></svg></div>
<div class="abs" style="left:980.3px;top:359px;"><svg width="10" height="11" viewBox="0 0 10 11" fill="currentColor" style="color:#777;"><path fill-rule="evenodd" d="M3.2 0h3.6l.6 1.2H10v1.5H0V1.2h2.6z M0.9 3.2h8.2l-.6 7.8H1.5z M3.4 4.5v5.2h.9V4.5z M5.6 4.5v5.2h.9V4.5z"/></svg></div>
<div class="abs" style="left:265px;top:383px;width:747.5px;height:33px;background:#e9fbe3;border-left:1px solid #ddd;border-right:1px solid #ddd"></div>
<div class="t" style="left:288.00px;top:382.63px;white-space:nowrap;text-align:left;font-size:13.78px;color:#333;letter-spacing:0.035em;">- Statistiche</div>
<div class="abs" style="left:680px;top:388.3px;width:57px;height:17.5px;background:#777;border-radius:9px"></div>
<div class="t" style="left:680.00px;top:383.07px;width:57px;text-align:center;font-size:12.51px;color:#fff;font-weight:bold;letter-spacing:0.045em;">Plugin</div>
<div class="abs" style="left:904px;top:388px;width:23px;height:22px;background:#f7ae4f;border-radius:3px"></div>
<div class="abs" style="left:910px;top:393.6px;"><svg width="11" height="11.9" viewBox="0 0 12 13" fill="currentColor" style="color:#fff8e8;"><path d="M3.2 3.1A4.9 4.9 0 1 0 8.8 3.1" fill="none" stroke="currentColor" stroke-width="2" stroke-linecap="round"/><rect x="5" y="0.2" width="2" height="6" rx="1"/></svg></div>
<div class="abs" style="left:980.3px;top:392px;"><svg width="10" height="11" viewBox="0 0 10 11" fill="currentColor" style="color:#777;"><path fill-rule="evenodd" d="M3.2 0h3.6l.6 1.2H10v1.5H0V1.2h2.6z M0.9 3.2h8.2l-.6 7.8H1.5z M3.4 4.5v5.2h.9V4.5z M5.6 4.5v5.2h.9V4.5z"/></svg></div>
<div class="abs" style="left:265px;top:416px;width:747.5px;height:33px;background:#e9fbe3;border-left:1px solid #ddd;border-right:1px solid #ddd"></div>
<div class="t" style="left:288.00px;top:415.63px;white-space:nowrap;text-align:left;font-size:13.78px;color:#333;letter-spacing:0.035em;">- Ddt del cliente</div>
<div class="abs" style="left:680px;top:421.3px;width:57px;height:17.5px;background:#777;border-radius:9px"></div>
<div class="t" style="left:680.00px;top:416.07px;width:57px;text-align:center;font-size:12.51px;color:#fff;font-weight:bold;letter-spacing:0.045em;">Plugin</div>
<div class="abs" style="left:904px;top:421px;width:23px;height:22px;background:#f7ae4f;border-radius:3px"></div>
<div class="abs" style="left:910px;top:426.6px;"><svg width="11" height="11.9" viewBox="0 0 12 13" fill="currentColor" style="color:#fff8e8;"><path d="M3.2 3.1A4.9 4.9 0 1 0 8.8 3.1" fill="none" stroke="currentColor" stroke-width="2" stroke-linecap="round"/><rect x="5" y="0.2" width="2" height="6" rx="1"/></svg></div>
<div class="abs" style="left:980.3px;top:425px;"><svg width="10" height="11" viewBox="0 0 10 11" fill="currentColor" style="color:#777;"><path fill-rule="evenodd" d="M3.2 0h3.6l.6 1.2H10v1.5H0V1.2h2.6z M0.9 3.2h8.2l-.6 7.8H1.5z M3.4 4.5v5.2h.9V4.5z M5.6 4.5v5.2h.9V4.5z"/></svg></div>
<div class="abs" style="left:265px;top:449px;width:747.5px;height:33px;background:#e9fbe3;border-left:1px solid #ddd;border-right:1px solid #ddd"></div>
<div class="t" style="left:288.00px;top:448.63px;white-space:nowrap;text-align:left;font-size:13.78px;color:#333;letter-spacing:0.035em;">- Dichiarazioni d'Intento</div>
<div class="abs" style="left:680px;top:454.3px;width:57px;height:17.5px;background:#777;border-radius:9px"></div>
<div class="t" style="left:680.00px;top:449.07px;width:57px;text-align:center;font-size:12.51px;color:#fff;font-weight:bold;letter-spacing:0.045em;">Plugin</div>
<div class="abs" style="left:904px;top:454px;width:23px;height:22px;background:#f7ae4f;border-radius:3px"></div>
<div class="abs" style="left:910px;top:459.6px;"><svg width="11" height="11.9" viewBox="0 0 12 13" fill="currentColor" style="color:#fff8e8;"><path d="M3.2 3.1A4.9 4.9 0 1 0 8.8 3.1" fill="none" stroke="currentColor" stroke-width="2" stroke-linecap="round"/><rect x="5" y="0.2" width="2" height="6" rx="1"/></svg></div>
<div class="abs" style="left:980.3px;top:458px;"><svg width="10" height="11" viewBox="0 0 10 11" fill="currentColor" style="color:#777;"><path fill-rule="evenodd" d="M3.2 0h3.6l.6 1.2H10v1.5H0V1.2h2.6z M0.9 3.2h8.2l-.6 7.8H1.5z M3.4 4.5v5.2h.9V4.5z M5.6 4.5v5.2h.9V4.5z"/></svg></div>
<div class="abs" style="left:265px;top:482px;width:747.5px;height:33px;background:#e9fbe3;border-left:1px solid #ddd;border-right:1px solid #ddd"></div>
<div class="t" style="left:288.00px;top:481.63px;white-space:nowrap;text-align:left;font-size:13.78px;color:#333;letter-spacing:0.035em;">- Storico attività</div>
<div class="abs" style="left:680px;top:487.3px;width:57px;height:17.5px;background:#777;border-radius:9px"></div>
<div class="t" style="left:680.00px;top:482.07px;width:57px;text-align:center;font-size:12.51px;color:#fff;font-weight:bold;letter-spacing:0.045em;">Plugin</div>
<div class="abs" style="left:904px;top:487px;width:23px;height:22px;background:#f7ae4f;border-radius:3px"></div>
<div class="abs" style="left:910px;top:492.6px;"><svg width="11" height="11.9" viewBox="0 0 12 13" fill="currentColor" style="color:#fff8e8;"><path d="M3.2 3.1A4.9 4.9 0 1 0 8.8 3.1" fill="none" stroke="currentColor" stroke-width="2" stroke-linecap="round"/><rect x="5" y="0.2" width="2" height="6" rx="1"/></svg></div>
<div class="abs" style="left:980.3px;top:491px;"><svg width="10" height="11" viewBox="0 0 10 11" fill="currentColor" style="color:#777;"><path fill-rule="evenodd" d="M3.2 0h3.6l.6 1.2H10v1.5H0V1.2h2.6z M0.9 3.2h8.2l-.6 7.8H1.5z M3.4 4.5v5.2h.9V4.5z M5.6 4.5v5.2h.9V4.5z"/></svg></div>
<div class="abs" style="left:265px;top:515px;width:747.5px;height:33px;background:#e9fbe3;border-left:1px solid #ddd;border-right:1px solid #ddd"></div>
<div class="t" style="left:288.00px;top:514.63px;white-space:nowrap;text-align:left;font-size:13.78px;color:#333;letter-spacing:0.035em;">- Allegati</div>
<div class="abs" style="left:680px;top:520.3px;width:57px;height:17.5px;background:#777;border-radius:9px"></div>
<div class="t" style="left:680.00px;top:515.07px;width:57px;text-align:center;font-size:12.51px;color:#fff;font-weight:bold;letter-spacing:0.045em;">Plugin</div>
<div class="abs" style="left:904px;top:520px;width:23px;height:22px;background:#f7ae4f;border-radius:3px"></div>
<div class="abs" style="left:910px;top:525.6px;"><svg width="11" height="11.9" viewBox="0 0 12 13" fill="currentColor" style="color:#fff8e8;"><path d="M3.2 3.1A4.9 4.9 0 1 0 8.8 3.1" fill="none" stroke="currentColor" stroke-width="2" stroke-linecap="round"/><rect x="5" y="0.2" width="2" height="6" rx="1"/></svg></div>
<div class="abs" style="left:980.3px;top:524px;"><svg width="10" height="11" viewBox="0 0 10 11" fill="currentColor" style="color:#777;"><path fill-rule="evenodd" d="M3.2 0h3.6l.6 1.2H10v1.5H0V1.2h2.6z M0.9 3.2h8.2l-.6 7.8H1.5z M3.4 4.5v5.2h.9V4.5z M5.6 4.5v5.2h.9V4.5z"/></svg></div>
<div class="abs" style="left:265px;top:548px;width:747.5px;height:33px;background:#e9fbe3;border-left:1px solid #ddd;border-right:1px solid #ddd"></div>
<div class="t" style="left:288.00px;top:547.63px;white-space:nowrap;text-align:left;font-size:13.78px;color:#333;letter-spacing:0.035em;">- Contratti del cliente</div>
<div class="abs" style="left:680px;top:553.3px;width:57px;height:17.5px;background:#777;border-radius:9px"></div>
<div class="t" style="left:680.00px;top:548.07px;width:57px;text-align:center;font-size:12.51px;color:#fff;font-weight:bold;letter-spacing:0.045em;">Plugin</div>
<div class="abs" style="left:904px;top:553px;width:23px;height:22px;background:#f7ae4f;border-radius:3px"></div>
<div class="abs" style="left:910px;top:558.6px;"><svg width="11" height="11.9" viewBox="0 0 12 13" fill="currentColor" style="color:#fff8e8;"><path d="M3.2 3.1A4.9 4.9 0 1 0 8.8 3.1" fill="none" stroke="currentColor" stroke-width="2" stroke-linecap="round"/><rect x="5" y="0.2" width="2" height="6" rx="1"/></svg></div>
<div class="abs" style="left:975px;top:553.3px;width:21px;height:21px;background:#e04b4b;border-radius:3px"></div>
<div class="abs" style="left:980.3px;top:558.8px;"><svg width="10" height="11" viewBox="0 0 10 11" fill="currentColor" style="color:#fff;"><path fill-rule="evenodd" d="M3.2 0h3.6l.6 1.2H10v1.5H0V1.2h2.6z M0.9 3.2h8.2l-.6 7.8H1.5z M3.4 4.5v5.2h.9V4.5z M5.6 4.5v5.2h.9V4.5z"/></svg></div>
<div class="abs" style="left:265px;top:581px;width:747.5px;height:33px;background:#e9fbe3;border-left:1px solid #ddd;border-right:1px solid #ddd"></div>
<div class="t" style="left:288.00px;top:580.63px;white-space:nowrap;text-align:left;font-size:13.78px;color:#333;letter-spacing:0.035em;">- Movimenti contabili</div>
<div class="abs" style="left:680px;top:586.3px;width:57px;height:17.5px;background:#777;border-radius:9px"></div>
<div class="t" style="left:680.00px;top:581.07px;width:57px;text-align:center;font-size:12.51px;color:#fff;font-weight:bold;letter-spacing:0.045em;">Plugin</div>
<div class="abs" style="left:904px;top:586px;width:23px;height:22px;background:#f7ae4f;border-radius:3px"></div>
<div class="abs" style="left:910px;top:591.6px;"><svg width="11" height="11.9" viewBox="0 0 12 13" fill="currentColor" style="color:#fff8e8;"><path d="M3.2 3.1A4.9 4.9 0 1 0 8.8 3.1" fill="none" stroke="currentColor" stroke-width="2" stroke-linecap="round"/><rect x="5" y="0.2" width="2" height="6" rx="1"/></svg></div>
<div class="abs" style="left:980.3px;top:590px;"><svg width="10" height="11" viewBox="0 0 10 11" fill="currentColor" style="color:#777;"><path fill-rule="evenodd" d="M3.2 0h3.6l.6 1.2H10v1.5H0V1.2h2.6z M0.9 3.2h8.2l-.6 7.8H1.5z M3.4 4.5v5.2h.9V4.5z M5.6 4.5v5.2h.9V4.5z"/></svg></div>
<div class="abs" style="left:265px;top:614px;width:747.5px;height:33px;background:#e9fbe3;border-left:1px solid #ddd;border-right:1px solid #ddd"></div>
<div class="t" style="left:288.00px;top:613.63px;white-space:nowrap;text-align:left;font-size:13.78px;color:#333;letter-spacing:0.035em;">- Regole pagamenti</div>
<div class="abs" style="left:680px;top:619.3px;width:57px;height:17.5px;background:#777;border-radius:9px"></div>
<div class="t" style="left:680.00px;top:614.07px;width:57px;text-align:center;font-size:12.51px;color:#fff;font-weight:bold;letter-spacing:0.045em;">Plugin</div>
<div class="abs" style="left:904px;top:619px;width:23px;height:22px;background:#f7ae4f;border-radius:3px"></div>
<div class="abs" style="left:910px;top:624.6px;"><svg width="11" height="11.9" viewBox="0 0 12 13" fill="currentColor" style="color:#fff8e8;"><path d="M3.2 3.1A4.9 4.9 0 1 0 8.8 3.1" fill="none" stroke="currentColor" stroke-width="2" stroke-linecap="round"/><rect x="5" y="0.2" width="2" height="6" rx="1"/></svg></div>
<div class="abs" style="left:980.3px;top:623px;"><svg width="10" height="11" viewBox="0 0 10 11" fill="currentColor" style="color:#777;"><path fill-rule="evenodd" d="M3.2 0h3.6l.6 1.2H10v1.5H0V1.2h2.6z M0.9 3.2h8.2l-.6 7.8H1.5z M3.4 4.5v5.2h.9V4.5z M5.6 4.5v5.2h.9V4.5z"/></svg></div>
<div class="abs" style="left:265px;top:647px;width:747.5px;height:33px;background:#e9fbe3;border-left:1px solid #ddd;border-right:1px solid #ddd"></div>
<div class="t" style="left:288.00px;top:646.63px;white-space:nowrap;text-align:left;font-size:13.78px;color:#333;letter-spacing:0.035em;">- Tipi di anagrafiche</div>
<div class="t" style="left:747.40px;top:646.63px;width:126px;text-align:center;font-size:13.78px;color:#333;letter-spacing:0.06em;">2.4.39</div>
<div class="abs" style="left:904px;top:652px;width:23px;height:22px;background:#f7ae4f;border-radius:3px"></div>
<div class="abs" style="left:910px;top:657.6px;"><svg width="11" height="11.9" viewBox="0 0 12 13" fill="currentColor" style="color:#fff8e8;"><path d="M3.2 3.1A4.9 4.9 0 1 0 8.8 3.1" fill="none" stroke="currentColor" stroke-width="2" stroke-linecap="round"/><rect x="5" y="0.2" width="2" height="6" rx="1"/></svg></div>
<div class="abs" style="left:980.3px;top:656px;"><svg width="10" height="11" viewBox="0 0 10 11" fill="currentColor" style="color:#777;"><path fill-rule="evenodd" d="M3.2 0h3.6l.6 1.2H10v1.5H0V1.2h2.6z M0.9 3.2h8.2l-.6 7.8H1.5z M3.4 4.5v5.2h.9V4.5z M5.6 4.5v5.2h.9V4.5z"/></svg></div>
<div class="abs" style="left:265px;top:680px;width:747.5px;height:33px;background:#e9fbe3;border-left:1px solid #ddd;border-right:1px solid #ddd"></div>
<div class="t" style="left:288.00px;top:679.63px;white-space:nowrap;text-align:left;font-size:13.78px;color:#333;letter-spacing:0.035em;">- Relazioni</div>
<div class="t" style="left:747.40px;top:679.63px;width:126px;text-align:center;font-size:13.78px;color:#333;letter-spacing:0.06em;">2.4.39</div>
<div class="abs" style="left:904px;top:685px;width:23px;height:22px;background:#f7ae4f;border-radius:3px"></div>
<div class="abs" style="left:910px;top:690.6px;"><svg width="11" height="11.9" viewBox="0 0 12 13" fill="currentColor" style="color:#fff8e8;"><path d="M3.2 3.1A4.9 4.9 0 1 0 8.8 3.1" fill="none" stroke="currentColor" stroke-width="2" stroke-linecap="round"/><rect x="5" y="0.2" width="2" height="6" rx="1"/></svg></div>
<div class="abs" style="left:980.3px;top:689px;"><svg width="10" height="11" viewBox="0 0 10 11" fill="currentColor" style="color:#777;"><path fill-rule="evenodd" d="M3.2 0h3.6l.6 1.2H10v1.5H0V1.2h2.6z M0.9 3.2h8.2l-.6 7.8H1.5z M3.4 4.5v5.2h.9V4.5z M5.6 4.5v5.2h.9V4.5z"/></svg></div>
<div class="abs" style="left:265px;top:713px;width:747.5px;height:33px;background:#e9fbe3;border-left:1px solid #ddd;border-right:1px solid #ddd"></div>
<div class="t" style="left:288.00px;top:712.63px;white-space:nowrap;text-align:left;font-size:13.78px;color:#333;letter-spacing:0.035em;">- Zone</div>
<div class="t" style="left:747.40px;top:712.63px;width:126px;text-align:center;font-size:13.78px;color:#333;letter-spacing:0.06em;">2.4.39</div>
<div class="abs" style="left:904px;top:718px;width:23px;height:22px;background:#f7ae4f;border-radius:3px"></div>
<div class="abs" style="left:910px;top:723.6px;"><svg width="11" height="11.9" viewBox="0 0 12 13" fill="currentColor" style="color:#fff8e8;"><path d="M3.2 3.1A4.9 4.9 0 1 0 8.8 3.1" fill="none" stroke="currentColor" stroke-width="2" stroke-linecap="round"/><rect x="5" y="0.2" width="2" height="6" rx="1"/></svg></div>
<div class="abs" style="left:980.3px;top:722px;"><svg width="10" height="11" viewBox="0 0 10 11" fill="currentColor" style="color:#777;"><path fill-rule="evenodd" d="M3.2 0h3.6l.6 1.2H10v1.5H0V1.2h2.6z M0.9 3.2h8.2l-.6 7.8H1.5z M3.4 4.5v5.2h.9V4.5z M5.6 4.5v5.2h.9V4.5z"/></svg></div>
<div class="abs" style="left:265px;top:746px;width:747.5px;height:33px;background:#e9fbe3;border-left:1px solid #ddd;border-right:1px solid #ddd"></div>
<div class="t" style="left:288.00px;top:745.63px;white-space:nowrap;text-align:left;font-size:13.78px;color:#333;letter-spacing:0.035em;">- Provenienze clienti</div>
<div class="t" style="left:747.40px;top:745.63px;width:126px;text-align:center;font-size:13.78px;color:#333;letter-spacing:0.06em;">2.4.39</div>
<div class="abs" style="left:904px;top:751px;width:23px;height:22px;background:#f7ae4f;border-radius:3px"></div>
<div class="abs" style="left:910px;top:756.6px;"><svg width="11" height="11.9" viewBox="0 0 12 13" fill="currentColor" style="color:#fff8e8;"><path d="M3.2 3.1A4.9 4.9 0 1 0 8.8 3.1" fill="none" stroke="currentColor" stroke-width="2" stroke-linecap="round"/><rect x="5" y="0.2" width="2" height="6" rx="1"/></svg></div>
<div class="abs" style="left:980.3px;top:755px;"><svg width="10" height="11" viewBox="0 0 10 11" fill="currentColor" style="color:#777;"><path fill-rule="evenodd" d="M3.2 0h3.6l.6 1.2H10v1.5H0V1.2h2.6z M0.9 3.2h8.2l-.6 7.8H1.5z M3.4 4.5v5.2h.9V4.5z M5.6 4.5v5.2h.9V4.5z"/></svg></div>
<div class="abs" style="left:265px;top:779px;width:747.5px;height:33px;background:#e9fbe3;border-left:1px solid #ddd;border-right:1px solid #ddd"></div>
<div class="t" style="left:288.00px;top:778.63px;white-space:nowrap;text-align:left;font-size:13.78px;color:#333;letter-spacing:0.035em;">- Settori merceologici</div>
<div class="t" style="left:747.40px;top:778.63px;width:126px;text-align:center;font-size:13.78px;color:#333;letter-spacing:0.06em;">2.4.39</div>
<div class="abs" style="left:904px;top:784px;width:23px;height:22px;background:#f7ae4f;border-radius:3px"></div>
<div class="abs" style="left:910px;top:789.6px;"><svg width="11" height="11.9" viewBox="0 0 12 13" fill="currentColor" style="color:#fff8e8;"><path d="M3.2 3.1A4.9 4.9 0 1 0 8.8 3.1" fill="none" stroke="currentColor" stroke-width="2" stroke-linecap="round"/><rect x="5" y="0.2" width="2" height="6" rx="1"/></svg></div>
<div class="abs" style="left:980.3px;top:788px;"><svg width="10" height="11" viewBox="0 0 10 11" fill="currentColor" style="color:#777;"><path fill-rule="evenodd" d="M3.2 0h3.6l.6 1.2H10v1.5H0V1.2h2.6z M0.9 3.2h8.2l-.6 7.8H1.5z M3.4 4.5v5.2h.9V4.5z M5.6 4.5v5.2h.9V4.5z"/></svg></div>
<div class="abs" style="left:265px;top:812px;width:747.5px;height:33px;background:#dff0d8;border-left:1px solid #ddd;border-right:1px solid #ddd"></div>
<div class="t" style="left:271.60px;top:811.63px;white-space:nowrap;text-align:left;font-size:13.78px;color:#333;letter-spacing:0.035em;">- Gestione email</div>
<div class="t" style="left:747.40px;top:811.63px;width:126px;text-align:center;font-size:13.78px;color:#333;letter-spacing:0.06em;">2.4.39</div>
<div class="abs" style="left:904px;top:817px;width:23px;height:22px;background:#eea64a;border-radius:3px"></div>
<div class="abs" style="left:910px;top:822.6px;"><svg width="11" height="11.9" viewBox="0 0 12 13" fill="currentColor" style="color:#fff8e8;"><path d="M3.2 3.1A4.9 4.9 0 1 0 8.8 3.1" fill="none" stroke="currentColor" stroke-width="2" stroke-linecap="round"/><rect x="5" y="0.2" width="2" height="6" rx="1"/></svg></div>
<div class="abs" style="left:980.3px;top:821px;"><svg width="10" height="11" viewBox="0 0 10 11" fill="currentColor" style="color:#777;"><path fill-rule="evenodd" d="M3.2 0h3.6l.6 1.2H10v1.5H0V1.2h2.6z M0.9 3.2h8.2l-.6 7.8H1.5z M3.4 4.5v5.2h.9V4.5z M5.6 4.5v5.2h.9V4.5z"/></svg></div>
<div class="abs" style="left:265px;top:845px;width:747.5px;height:33px;background:#e9fbe3;border-left:1px solid #ddd;border-right:1px solid #ddd"></div>
<div class="t" style="left:288.00px;top:844.63px;white-space:nowrap;text-align:left;font-size:13.78px;color:#333;letter-spacing:0.035em;">- Newsletter</div>
<div class="t" style="left:747.40px;top:844.63px;width:126px;text-align:center;font-size:13.78px;color:#333;letter-spacing:0.06em;">2.4.39</div>
<div class="abs" style="left:904px;top:850px;width:23px;height:22px;background:#f7ae4f;border-radius:3px"></div>
<div class="abs" style="left:910px;top:855.6px;"><svg width="11" height="11.9" viewBox="0 0 12 13" fill="currentColor" style="color:#fff8e8;"><path d="M3.2 3.1A4.9 4.9 0 1 0 8.8 3.1" fill="none" stroke="currentColor" stroke-width="2" stroke-linecap="round"/><rect x="5" y="0.2" width="2" height="6" rx="1"/></svg></div>
<div class="abs" style="left:980.3px;top:854px;"><svg width="10" height="11" viewBox="0 0 10 11" fill="currentColor" style="color:#777;"><path fill-rule="evenodd" d="M3.2 0h3.6l.6 1.2H10v1.5H0V1.2h2.6z M0.9 3.2h8.2l-.6 7.8H1.5z M3.4 4.5v5.2h.9V4.5z M5.6 4.5v5.2h.9V4.5z"/></svg></div>
<div class="abs" style="left:265px;top:878px;width:747.5px;height:33px;background:#e9fbe3;border-left:1px solid #ddd;border-right:1px solid #ddd"></div>
<div class="t" style="left:288.00px;top:877.63px;white-space:nowrap;text-align:left;font-size:13.78px;color:#333;letter-spacing:0.035em;">- Coda di invio</div>
<div class="t" style="left:747.40px;top:877.63px;width:126px;text-align:center;font-size:13.78px;color:#333;letter-spacing:0.06em;">2.4.39</div>
<div class="abs" style="left:904px;top:883px;width:23px;height:22px;background:#f7ae4f;border-radius:3px"></div>
<div class="abs" style="left:910px;top:888.6px;"><svg width="11" height="11.9" viewBox="0 0 12 13" fill="currentColor" style="color:#fff8e8;"><path d="M3.2 3.1A4.9 4.9 0 1 0 8.8 3.1" fill="none" stroke="currentColor" stroke-width="2" stroke-linecap="round"/><rect x="5" y="0.2" width="2" height="6" rx="1"/></svg></div>
<div class="abs" style="left:980.3px;top:887px;"><svg width="10" height="11" viewBox="0 0 10 11" fill="currentColor" style="color:#777;"><path fill-rule="evenodd" d="M3.2 0h3.6l.6 1.2H10v1.5H0V1.2h2.6z M0.9 3.2h8.2l-.6 7.8H1.5z M3.4 4.5v5.2h.9V4.5z M5.6 4.5v5.2h.9V4.5z"/></svg></div>
<div class="abs" style="left:265px;top:911px;width:747.5px;height:33px;background:#e9fbe3;border-left:1px solid #ddd;border-right:1px solid #ddd"></div>
<div class="t" style="left:288.00px;top:910.63px;white-space:nowrap;text-align:left;font-size:13.78px;color:#333;letter-spacing:0.035em;">- Liste</div>
<div class="t" style="left:747.40px;top:910.63px;width:126px;text-align:center;font-size:13.78px;color:#333;letter-spacing:0.06em;">2.4.39</div>
<div class="abs" style="left:904px;top:916px;width:23px;height:22px;background:#f7ae4f;border-radius:3px"></div>
<div class="abs" style="left:910px;top:921.6px;"><svg width="11" height="11.9" viewBox="0 0 12 13" fill="currentColor" style="color:#fff8e8;"><path d="M3.2 3.1A4.9 4.9 0 1 0 8.8 3.1" fill="none" stroke="currentColor" stroke-width="2" stroke-linecap="round"/><rect x="5" y="0.2" width="2" height="6" rx="1"/></svg></div>
<div class="abs" style="left:980.3px;top:920px;"><svg width="10" height="11" viewBox="0 0 10 11" fill="currentColor" style="color:#777;"><path fill-rule="evenodd" d="M3.2 0h3.6l.6 1.2H10v1.5H0V1.2h2.6z M0.9 3.2h8.2l-.6 7.8H1.5z M3.4 4.5v5.2h.9V4.5z M5.6 4.5v5.2h.9V4.5z"/></svg></div>
<div class="abs" style="left:265px;top:944px;width:747.5px;height:33px;background:#e9fbe3;border-left:1px solid #ddd;border-right:1px solid #ddd"></div>
<div class="t" style="left:288.00px;top:943.63px;white-space:nowrap;text-align:left;font-size:13.78px;color:#333;letter-spacing:0.035em;">- Template</div>
<div class="t" style="left:747.40px;top:943.63px;width:126px;text-align:center;font-size:13.78px;color:#333;letter-spacing:0.06em;">2.4.39</div>
<div class="abs" style="left:904px;top:949px;width:23px;height:22px;background:#f7ae4f;border-radius:3px"></div>
<div class="abs" style="left:910px;top:954.6px;"><svg width="11" height="11.9" viewBox="0 0 12 13" fill="currentColor" style="color:#fff8e8;"><path d="M3.2 3.1A4.9 4.9 0 1 0 8.8 3.1" fill="none" stroke="currentColor" stroke-width="2" stroke-linecap="round"/><rect x="5" y="0.2" width="2" height="6" rx="1"/></svg></div>
<div class="abs" style="left:980.3px;top:953px;"><svg width="10" height="11" viewBox="0 0 10 11" fill="currentColor" style="color:#777;"><path fill-rule="evenodd" d="M3.2 0h3.6l.6 1.2H10v1.5H0V1.2h2.6z M0.9 3.2h8.2l-.6 7.8H1.5z M3.4 4.5v5.2h.9V4.5z M5.6 4.5v5.2h.9V4.5z"/></svg></div>
<div class="t" style="left:1068.80px;top:186.93px;white-space:nowrap;text-align:left;font-size:13.78px;color:#333;font-weight:bold;letter-spacing:0.06em;">Nome</div>
<div class="t" style="left:1345.70px;top:186.93px;white-space:nowrap;text-align:left;font-size:13.78px;color:#333;font-weight:bold;letter-spacing:0.06em;">Dimensione</div>
<div class="t" style="left:1538.00px;top:186.93px;white-space:nowrap;text-align:left;font-size:13.78px;color:#333;font-weight:bold;letter-spacing:0.06em;">Ubicazione</div>
<div class="t" style="left:1669.40px;top:186.93px;white-space:nowrap;text-align:left;font-size:13.78px;color:#333;font-weight:bold;letter-spacing:0.06em;">Stato</div>
<div class="t" style="left:1725.60px;top:186.93px;white-space:nowrap;text-align:left;font-size:13.78px;color:#333;font-weight:bold;letter-spacing:0.06em;">Posizione</div>
<div class="abs" style="left:1063px;top:215px;width:747.6px;height:2px;background:#ddd;"></div>
<div class="t" style="left:1068.80px;top:216.63px;white-space:nowrap;text-align:left;font-size:13.78px;color:#333;font-weight:bold;letter-spacing:0.06em;">Dashboard</div>
<div class="abs" style="left:1063px;top:246px;width:747.6px;height:2px;background:#ddd;"></div>
<div class="abs" style="left:1063px;top:248px;width:747.6px;height:59px;background:#dff0d8;"></div>
<div class="t" style="left:1068.30px;top:247.63px;white-space:nowrap;text-align:left;font-size:13.78px;color:#333;letter-spacing:0.035em;">Promemoria contratti da pianificare</div>
<div class="abs" style="left:1345px;top:253px;width:183px;height:34px;background:#fff;border:1px solid #ccc;border-radius:4px"></div>
<div class="t" style="left:1363.00px;top:254.26px;white-space:nowrap;text-align:left;font-size:14.84px;color:#999;letter-spacing:0.035em;">Da impostazioni</div>
<div class="abs" style="left:1508px;top:268px;"><svg width="8" height="4.5" viewBox="0 0 8 5" fill="currentColor" style="color:#888;"><path d="M0 0h8L4 5z"/></svg></div>
<div class="t" style="left:1538.00px;top:247.96px;white-space:nowrap;text-align:left;font-size:11.66px;color:#333;letter-spacing:0.035em;">Schermata modulo</div>
<div class="abs" style="left:1681px;top:253px;width:22px;height:22px;background:#eea64a;border-radius:3px"></div>
<div class="abs" style="left:1686.5px;top:257.4px;"><svg width="11" height="11.9" viewBox="0 0 12 13" fill="currentColor" style="color:#fff8e8;"><path d="M3.2 3.1A4.9 4.9 0 1 0 8.8 3.1" fill="none" stroke="currentColor" stroke-width="2" stroke-linecap="round"/><rect x="5" y="0.2" width="2" height="6" rx="1"/></svg></div>
<div class="abs" style="left:1747px;top:256px;"><svg width="11" height="11" viewBox="0 0 11 11" fill="currentColor" style="color:#1a1a1a;"><path d="M5.5 0L11 5.5 9.3 7.2 6.8 4.7V11H4.2V4.7L1.7 7.2 0 5.5z"/></svg></div>
<div class="abs" style="left:1763px;top:252px;width:22px;height:22px;background:#5bc0de;border-radius:3px"></div>
<div class="abs" style="left:1769px;top:258px;"><svg width="10" height="10" viewBox="0 0 11 11" fill="currentColor" style="color:#fff;"><path d="M11 5.5L5.5 11 3.8 9.3 6.3 6.8H0V4.2h6.3L3.8 1.7 5.5 0z"/></svg></div>
<div class="abs" style="left:1063px;top:307px;width:747.6px;height:60px;background:#dff0d8;border-top:1px solid #d2dfcc"></div>
<div class="t" style="left:1068.30px;top:307.63px;white-space:nowrap;text-align:left;font-size:13.78px;color:#333;letter-spacing:0.035em;">Attività da pianificare</div>
<div class="abs" style="left:1345px;top:313px;width:183px;height:34px;background:#fff;border:1px solid #ccc;border-radius:4px"></div>
<div class="t" style="left:1363.00px;top:314.26px;white-space:nowrap;text-align:left;font-size:14.84px;color:#999;letter-spacing:0.035em;">Da impostazioni</div>
<div class="abs" style="left:1508px;top:328px;"><svg width="8" height="4.5" viewBox="0 0 8 5" fill="currentColor" style="color:#888;"><path d="M0 0h8L4 5z"/></svg></div>
<div class="t" style="left:1538.00px;top:307.96px;white-space:nowrap;text-align:left;font-size:11.66px;color:#333;letter-spacing:0.035em;">Schermata modulo</div>
<div class="abs" style="left:1681px;top:313px;width:22px;height:22px;background:#eea64a;border-radius:3px"></div>
<div class="abs" style="left:1686.5px;top:317.4px;"><svg width="11" height="11.9" viewBox="0 0 12 13" fill="currentColor" style="color:#fff8e8;"><path d="M3.2 3.1A4.9 4.9 0 1 0 8.8 3.1" fill="none" stroke="currentColor" stroke-width="2" stroke-linecap="round"/><rect x="5" y="0.2" width="2" height="6" rx="1"/></svg></div>
<div class="abs" style="left:1747px;top:316px;"><svg width="11" height="11" viewBox="0 0 11 11" fill="currentColor" style="color:#1a1a1a;"><path d="M5.5 0L11 5.5 9.3 7.2 6.8 4.7V11H4.2V4.7L1.7 7.2 0 5.5z"/></svg></div>
<div class="abs" style="left:1763px;top:312px;width:22px;height:22px;background:#5bc0de;border-radius:3px"></div>
<div class="abs" style="left:1769px;top:318px;"><svg width="10" height="10" viewBox="0 0 11 11" fill="currentColor" style="color:#fff;"><path d="M11 5.5L5.5 11 3.8 9.3 6.3 6.8H0V4.2h6.3L3.8 1.7 5.5 0z"/></svg></div>
<div class="abs" style="left:1063px;top:367px;width:747.6px;height:60px;background:#dff0d8;border-top:1px solid #d2dfcc"></div>
<div class="t" style="left:1068.30px;top:367.63px;white-space:nowrap;text-align:left;font-size:13.78px;color:#333;letter-spacing:0.035em;">Note interne</div>
<div class="abs" style="left:1345px;top:373px;width:183px;height:34px;background:#fff;border:1px solid #ccc;border-radius:4px"></div>
<div class="t" style="left:1363.00px;top:374.26px;white-space:nowrap;text-align:left;font-size:14.84px;color:#999;letter-spacing:0.035em;">Da impostazioni</div>
<div class="abs" style="left:1508px;top:388px;"><svg width="8" height="4.5" viewBox="0 0 8 5" fill="currentColor" style="color:#888;"><path d="M0 0h8L4 5z"/></svg></div>
<div class="t" style="left:1538.00px;top:367.96px;white-space:nowrap;text-align:left;font-size:11.66px;color:#333;letter-spacing:0.035em;">Schermata modulo</div>
<div class="abs" style="left:1681px;top:373px;width:22px;height:22px;background:#eea64a;border-radius:3px"></div>
<div class="abs" style="left:1686.5px;top:377.4px;"><svg width="11" height="11.9" viewBox="0 0 12 13" fill="currentColor" style="color:#fff8e8;"><path d="M3.2 3.1A4.9 4.9 0 1 0 8.8 3.1" fill="none" stroke="currentColor" stroke-width="2" stroke-linecap="round"/><rect x="5" y="0.2" width="2" height="6" rx="1"/></svg></div>
<div class="abs" style="left:1747px;top:376px;"><svg width="11" height="11" viewBox="0 0 11 11" fill="currentColor" style="color:#1a1a1a;"><path d="M5.5 0L11 5.5 9.3 7.2 6.8 4.7V11H4.2V4.7L1.7 7.2 0 5.5z"/></svg></div>
<div class="abs" style="left:1763px;top:372px;width:22px;height:22px;background:#5bc0de;border-radius:3px"></div>
<div class="abs" style="left:1769px;top:378px;"><svg width="10" height="10" viewBox="0 0 11 11" fill="currentColor" style="color:#fff;"><path d="M11 5.5L5.5 11 3.8 9.3 6.3 6.8H0V4.2h6.3L3.8 1.7 5.5 0z"/></svg></div>
<div class="abs" style="left:1063px;top:427px;width:747.6px;height:60px;background:#dff0d8;border-top:1px solid #d2dfcc"></div>
<div class="t" style="left:1068.30px;top:427.63px;white-space:nowrap;text-align:left;font-size:13.78px;color:#333;letter-spacing:0.035em;">Scadenze</div>
<div class="abs" style="left:1345px;top:433px;width:183px;height:34px;background:#fff;border:1px solid #ccc;border-radius:4px"></div>
<div class="t" style="left:1363.00px;top:434.26px;white-space:nowrap;text-align:left;font-size:14.84px;color:#999;letter-spacing:0.035em;">Da impostazioni</div>
<div class="abs" style="left:1508px;top:448px;"><svg width="8" height="4.5" viewBox="0 0 8 5" fill="currentColor" style="color:#888;"><path d="M0 0h8L4 5z"/></svg></div>
<div class="t" style="left:1538.00px;top:427.96px;white-space:nowrap;text-align:left;font-size:11.66px;color:#333;letter-spacing:0.035em;">Schermata modulo</div>
<div class="abs" style="left:1681px;top:433px;width:22px;height:22px;background:#eea64a;border-radius:3px"></div>
<div class="abs" style="left:1686.5px;top:437.4px;"><svg width="11" height="11.9" viewBox="0 0 12 13" fill="currentColor" style="color:#fff8e8;"><path d="M3.2 3.1A4.9 4.9 0 1 0 8.8 3.1" fill="none" stroke="currentColor" stroke-width="2" stroke-linecap="round"/><rect x="5" y="0.2" width="2" height="6" rx="1"/></svg></div>
<div class="abs" style="left:1747px;top:436px;"><svg width="11" height="11" viewBox="0 0 11 11" fill="currentColor" style="color:#1a1a1a;"><path d="M5.5 0L11 5.5 9.3 7.2 6.8 4.7V11H4.2V4.7L1.7 7.2 0 5.5z"/></svg></div>
<div class="abs" style="left:1763px;top:432px;width:22px;height:22px;background:#5bc0de;border-radius:3px"></div>
<div class="abs" style="left:1769px;top:438px;"><svg width="10" height="10" viewBox="0 0 11 11" fill="currentColor" style="color:#fff;"><path d="M11 5.5L5.5 11 3.8 9.3 6.3 6.8H0V4.2h6.3L3.8 1.7 5.5 0z"/></svg></div>
<div class="abs" style="left:1063px;top:487px;width:747.6px;height:60px;background:#dff0d8;border-top:1px solid #d2dfcc"></div>
<div class="t" style="left:1068.30px;top:487.63px;white-space:nowrap;text-align:left;font-size:13.78px;color:#333;letter-spacing:0.035em;">Articoli in esaurimento</div>
<div class="abs" style="left:1345px;top:493px;width:183px;height:34px;background:#fff;border:1px solid #ccc;border-radius:4px"></div>
<div class="t" style="left:1363.00px;top:494.26px;white-space:nowrap;text-align:left;font-size:14.84px;color:#999;letter-spacing:0.035em;">Da impostazioni</div>
<div class="abs" style="left:1508px;top:508px;"><svg width="8" height="4.5" viewBox="0 0 8 5" fill="currentColor" style="color:#888;"><path d="M0 0h8L4 5z"/></svg></div>
<div class="t" style="left:1538.00px;top:487.96px;white-space:nowrap;text-align:left;font-size:11.66px;color:#333;letter-spacing:0.035em;">Schermata modulo</div>
<div class="abs" style="left:1681px;top:493px;width:22px;height:22px;background:#eea64a;border-radius:3px"></div>
<div class="abs" style="left:1686.5px;top:497.4px;"><svg width="11" height="11.9" viewBox="0 0 12 13" fill="currentColor" style="color:#fff8e8;"><path d="M3.2 3.1A4.9 4.9 0 1 0 8.8 3.1" fill="none" stroke="currentColor" stroke-width="2" stroke-linecap="round"/><rect x="5" y="0.2" width="2" height="6" rx="1"/></svg></div>
<div class="abs" style="left:1747px;top:496px;"><svg width="11" height="11" viewBox="0 0 11 11" fill="currentColor" style="color:#1a1a1a;"><path d="M5.5 0L11 5.5 9.3 7.2 6.8 4.7V11H4.2V4.7L1.7 7.2 0 5.5z"/></svg></div>
<div class="abs" style="left:1763px;top:492px;width:22px;height:22px;background:#5bc0de;border-radius:3px"></div>
<div class="abs" style="left:1769px;top:498px;"><svg width="10" height="10" viewBox="0 0 11 11" fill="currentColor" style="color:#fff;"><path d="M11 5.5L5.5 11 3.8 9.3 6.3 6.8H0V4.2h6.3L3.8 1.7 5.5 0z"/></svg></div>
<div class="abs" style="left:1063px;top:547px;width:747.6px;height:60px;background:#dff0d8;border-top:1px solid #d2dfcc"></div>
<div class="t" style="left:1068.30px;top:547.63px;white-space:nowrap;text-align:left;font-size:13.78px;color:#333;letter-spacing:0.035em;">Preventivi in lavorazione</div>
<div class="abs" style="left:1345px;top:553px;width:183px;height:34px;background:#fff;border:1px solid #ccc;border-radius:4px"></div>
<div class="t" style="left:1363.00px;top:554.26px;white-space:nowrap;text-align:left;font-size:14.84px;color:#999;letter-spacing:0.035em;">Da impostazioni</div>
<div class="abs" style="left:1508px;top:568px;"><svg width="8" height="4.5" viewBox="0 0 8 5" fill="currentColor" style="color:#888;"><path d="M0 0h8L4 5z"/></svg></div>
<div class="t" style="left:1538.00px;top:547.96px;white-space:nowrap;text-align:left;font-size:11.66px;color:#333;letter-spacing:0.035em;">Schermata modulo</div>
<div class="abs" style="left:1681px;top:553px;width:22px;height:22px;background:#eea64a;border-radius:3px"></div>
<div class="abs" style="left:1686.5px;top:557.4px;"><svg width="11" height="11.9" viewBox="0 0 12 13" fill="currentColor" style="color:#fff8e8;"><path d="M3.2 3.1A4.9 4.9 0 1 0 8.8 3.1" fill="none" stroke="currentColor" stroke-width="2" stroke-linecap="round"/><rect x="5" y="0.2" width="2" height="6" rx="1"/></svg></div>
<div class="abs" style="left:1747px;top:556px;"><svg width="11" height="11" viewBox="0 0 11 11" fill="currentColor" style="color:#1a1a1a;"><path d="M5.5 0L11 5.5 9.3 7.2 6.8 4.7V11H4.2V4.7L1.7 7.2 0 5.5z"/></svg></div>
<div class="abs" style="left:1763px;top:552px;width:22px;height:22px;background:#5bc0de;border-radius:3px"></div>
<div class="abs" style="left:1769px;top:558px;"><svg width="10" height="10" viewBox="0 0 11 11" fill="currentColor" style="color:#fff;"><path d="M11 5.5L5.5 11 3.8 9.3 6.3 6.8H0V4.2h6.3L3.8 1.7 5.5 0z"/></svg></div>
<div class="abs" style="left:1063px;top:607px;width:747.6px;height:60px;background:#dff0d8;border-top:1px solid #d2dfcc"></div>
<div class="t" style="left:1068.30px;top:607.63px;white-space:nowrap;text-align:left;font-size:13.78px;color:#333;letter-spacing:0.035em;">Contratti in scadenza</div>
<div class="abs" style="left:1345px;top:613px;width:183px;height:34px;background:#fff;border:1px solid #ccc;border-radius:4px"></div>
<div class="t" style="left:1363.00px;top:614.26px;white-space:nowrap;text-align:left;font-size:14.84px;color:#999;letter-spacing:0.035em;">Da impostazioni</div>
<div class="abs" style="left:1508px;top:628px;"><svg width="8" height="4.5" viewBox="0 0 8 5" fill="currentColor" style="color:#888;"><path d="M0 0h8L4 5z"/></svg></div>
<div class="t" style="left:1538.00px;top:607.96px;white-space:nowrap;text-align:left;font-size:11.66px;color:#333;letter-spacing:0.035em;">Schermata modulo</div>
<div class="abs" style="left:1681px;top:613px;width:22px;height:22px;background:#eea64a;border-radius:3px"></div>
<div class="abs" style="left:1686.5px;top:617.4px;"><svg width="11" height="11.9" viewBox="0 0 12 13" fill="currentColor" style="color:#fff8e8;"><path d="M3.2 3.1A4.9 4.9 0 1 0 8.8 3.1" fill="none" stroke="currentColor" stroke-width="2" stroke-linecap="round"/><rect x="5" y="0.2" width="2" height="6" rx="1"/></svg></div>
<div class="abs" style="left:1747px;top:616px;"><svg width="11" height="11" viewBox="0 0 11 11" fill="currentColor" style="color:#1a1a1a;"><path d="M5.5 0L11 5.5 9.3 7.2 6.8 4.7V11H4.2V4.7L1.7 7.2 0 5.5z"/></svg></div>
<div class="abs" style="left:1763px;top:612px;width:22px;height:22px;background:#5bc0de;border-radius:3px"></div>
<div class="abs" style="left:1769px;top:618px;"><svg width="10" height="10" viewBox="0 0 11 11" fill="currentColor" style="color:#fff;"><path d="M11 5.5L5.5 11 3.8 9.3 6.3 6.8H0V4.2h6.3L3.8 1.7 5.5 0z"/></svg></div>
<div class="abs" style="left:1063px;top:667px;width:747.6px;height:60px;background:#dff0d8;border-top:1px solid #d2dfcc"></div>
<div class="t" style="left:1068.30px;top:667.63px;white-space:nowrap;text-align:left;font-size:13.78px;color:#333;letter-spacing:0.035em;">Rate contrattuali</div>
<div class="abs" style="left:1345px;top:673px;width:183px;height:34px;background:#fff;border:1px solid #ccc;border-radius:4px"></div>
<div class="t" style="left:1363.00px;top:674.26px;white-space:nowrap;text-align:left;font-size:14.84px;color:#999;letter-spacing:0.035em;">Da impostazioni</div>
<div class="abs" style="left:1508px;top:688px;"><svg width="8" height="4.5" viewBox="0 0 8 5" fill="currentColor" style="color:#888;"><path d="M0 0h8L4 5z"/></svg></div>
<div class="t" style="left:1538.00px;top:667.96px;white-space:nowrap;text-align:left;font-size:11.66px;color:#333;letter-spacing:0.035em;">Schermata modulo</div>
<div class="abs" style="left:1681px;top:673px;width:22px;height:22px;background:#eea64a;border-radius:3px"></div>
<div class="abs" style="left:1686.5px;top:677.4px;"><svg width="11" height="11.9" viewBox="0 0 12 13" fill="currentColor" style="color:#fff8e8;"><path d="M3.2 3.1A4.9 4.9 0 1 0 8.8 3.1" fill="none" stroke="currentColor" stroke-width="2" stroke-linecap="round"/><rect x="5" y="0.2" width="2" height="6" rx="1"/></svg></div>
<div class="abs" style="left:1747px;top:676px;"><svg width="11" height="11" viewBox="0 0 11 11" fill="currentColor" style="color:#1a1a1a;"><path d="M5.5 0L11 5.5 9.3 7.2 6.8 4.7V11H4.2V4.7L1.7 7.2 0 5.5z"/></svg></div>
<div class="abs" style="left:1763px;top:672px;width:22px;height:22px;background:#5bc0de;border-radius:3px"></div>
<div class="abs" style="left:1769px;top:678px;"><svg width="10" height="10" viewBox="0 0 11 11" fill="currentColor" style="color:#fff;"><path d="M11 5.5L5.5 11 3.8 9.3 6.3 6.8H0V4.2h6.3L3.8 1.7 5.5 0z"/></svg></div>
<div class="abs" style="left:1063px;top:727px;width:747.6px;height:60px;background:#dff0d8;border-top:1px solid #d2dfcc"></div>
<div class="t" style="left:1068.30px;top:727.63px;white-space:nowrap;text-align:left;font-size:13.78px;color:#333;letter-spacing:0.035em;">Stampa calendario</div>
<div class="abs" style="left:1345px;top:733px;width:183px;height:34px;background:#fff;border:1px solid #ccc;border-radius:4px"></div>
<div class="t" style="left:1363.00px;top:734.26px;white-space:nowrap;text-align:left;font-size:14.84px;color:#999;letter-spacing:0.035em;">Da impostazioni</div>
<div class="abs" style="left:1508px;top:748px;"><svg width="8" height="4.5" viewBox="0 0 8 5" fill="currentColor" style="color:#888;"><path d="M0 0h8L4 5z"/></svg></div>
<div class="t" style="left:1538.00px;top:727.96px;white-space:nowrap;text-align:left;font-size:11.66px;color:#333;letter-spacing:0.035em;">Schermata modulo</div>
<div class="abs" style="left:1681px;top:733px;width:22px;height:22px;background:#eea64a;border-radius:3px"></div>
<div class="abs" style="left:1686.5px;top:737.4px;"><svg width="11" height="11.9" viewBox="0 0 12 13" fill="currentColor" style="color:#fff8e8;"><path d="M3.2 3.1A4.9 4.9 0 1 0 8.8 3.1" fill="none" stroke="currentColor" stroke-width="2" stroke-linecap="round"/><rect x="5" y="0.2" width="2" height="6" rx="1"/></svg></div>
<div class="abs" style="left:1747px;top:736px;"><svg width="11" height="11" viewBox="0 0 11 11" fill="currentColor" style="color:#1a1a1a;"><path d="M5.5 0L11 5.5 9.3 7.2 6.8 4.7V11H4.2V4.7L1.7 7.2 0 5.5z"/></svg></div>
<div class="abs" style="left:1763px;top:732px;width:22px;height:22px;background:#5bc0de;border-radius:3px"></div>
<div class="abs" style="left:1769px;top:738px;"><svg width="10" height="10" viewBox="0 0 11 11" fill="currentColor" style="color:#fff;"><path d="M11 5.5L5.5 11 3.8 9.3 6.3 6.8H0V4.2h6.3L3.8 1.7 5.5 0z"/></svg></div>
<div class="abs" style="left:1063px;top:787px;width:747.6px;height:60px;background:#dff0d8;border-top:1px solid #d2dfcc"></div>
<div class="t" style="left:1068.30px;top:787.63px;white-space:nowrap;text-align:left;font-size:13.78px;color:#333;letter-spacing:0.035em;">Attività nello stato da programmare</div>
<div class="abs" style="left:1345px;top:793px;width:183px;height:34px;background:#fff;border:1px solid #ccc;border-radius:4px"></div>
<div class="t" style="left:1363.00px;top:794.26px;white-space:nowrap;text-align:left;font-size:14.84px;color:#999;letter-spacing:0.035em;">Da impostazioni</div>
<div class="abs" style="left:1508px;top:808px;"><svg width="8" height="4.5" viewBox="0 0 8 5" fill="currentColor" style="color:#888;"><path d="M0 0h8L4 5z"/></svg></div>
<div class="t" style="left:1538.00px;top:787.96px;white-space:nowrap;text-align:left;font-size:11.66px;color:#333;letter-spacing:0.035em;">Schermata modulo</div>
<div class="abs" style="left:1681px;top:793px;width:22px;height:22px;background:#eea64a;border-radius:3px"></div>
<div class="abs" style="left:1686.5px;top:797.4px;"><svg width="11" height="11.9" viewBox="0 0 12 13" fill="currentColor" style="color:#fff8e8;"><path d="M3.2 3.1A4.9 4.9 0 1 0 8.8 3.1" fill="none" stroke="currentColor" stroke-width="2" stroke-linecap="round"/><rect x="5" y="0.2" width="2" height="6" rx="1"/></svg></div>
<div class="abs" style="left:1747px;top:796px;"><svg width="11" height="11" viewBox="0 0 11 11" fill="currentColor" style="color:#1a1a1a;"><path d="M5.5 0L11 5.5 9.3 7.2 6.8 4.7V11H4.2V4.7L1.7 7.2 0 5.5z"/></svg></div>
<div class="abs" style="left:1763px;top:792px;width:22px;height:22px;background:#5bc0de;border-radius:3px"></div>
<div class="abs" style="left:1769px;top:798px;"><svg width="10" height="10" viewBox="0 0 11 11" fill="currentColor" style="color:#fff;"><path d="M11 5.5L5.5 11 3.8 9.3 6.3 6.8H0V4.2h6.3L3.8 1.7 5.5 0z"/></svg></div>
<div class="abs" style="left:1063px;top:847px;width:747.6px;height:60px;background:#dff0d8;border-top:1px solid #d2dfcc"></div>
<div class="t" style="left:1068.30px;top:847.63px;white-space:nowrap;text-align:left;font-size:13.78px;color:#333;letter-spacing:0.035em;">Attività confermate</div>
<div class="abs" style="left:1345px;top:853px;width:183px;height:34px;background:#fff;border:1px solid #ccc;border-radius:4px"></div>
<div class="t" style="left:1363.00px;top:854.26px;white-space:nowrap;text-align:left;font-size:14.84px;color:#999;letter-spacing:0.035em;">Da impostazioni</div>
<div class="abs" style="left:1508px;top:868px;"><svg width="8" height="4.5" viewBox="0 0 8 5" fill="currentColor" style="color:#888;"><path d="M0 0h8L4 5z"/></svg></div>
<div class="t" style="left:1538.00px;top:847.96px;white-space:nowrap;text-align:left;font-size:11.66px;color:#333;letter-spacing:0.035em;">Schermata modulo</div>
<div class="abs" style="left:1681px;top:853px;width:22px;height:22px;background:#eea64a;border-radius:3px"></div>
<div class="abs" style="left:1686.5px;top:857.4px;"><svg width="11" height="11.9" viewBox="0 0 12 13" fill="currentColor" style="color:#fff8e8;"><path d="M3.2 3.1A4.9 4.9 0 1 0 8.8 3.1" fill="none" stroke="currentColor" stroke-width="2" stroke-linecap="round"/><rect x="5" y="0.2" width="2" height="6" rx="1"/></svg></div>
<div class="abs" style="left:1747px;top:856px;"><svg width="11" height="11" viewBox="0 0 11 11" fill="currentColor" style="color:#1a1a1a;"><path d="M5.5 0L11 5.5 9.3 7.2 6.8 4.7V11H4.2V4.7L1.7 7.2 0 5.5z"/></svg></div>
<div class="abs" style="left:1763px;top:852px;width:22px;height:22px;background:#5bc0de;border-radius:3px"></div>
<div class="abs" style="left:1769px;top:858px;"><svg width="10" height="10" viewBox="0 0 11 11" fill="currentColor" style="color:#fff;"><path d="M11 5.5L5.5 11 3.8 9.3 6.3 6.8H0V4.2h6.3L3.8 1.7 5.5 0z"/></svg></div>
<div class="t" style="left:1068.80px;top:907.33px;white-space:nowrap;text-align:left;font-size:13.78px;color:#333;font-weight:bold;letter-spacing:0.06em;">Anagrafiche</div>
<div class="abs" style="left:1063px;top:936.5px;width:747.6px;height:3px;background:#ddd;"></div>
<div class="abs" style="left:1841.5px;top:2px;width:3px;height:170px;background:#6a6a6a;border-radius:2px"></div>
</div></body></html>
